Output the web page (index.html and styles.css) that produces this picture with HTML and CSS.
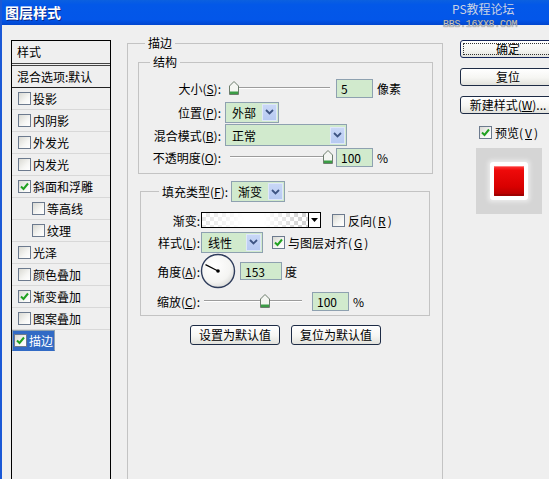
FILE: index.html
```html
<!DOCTYPE html>
<html lang="zh-CN">
<head>
<meta charset="utf-8">
<title>图层样式</title>
<link rel="stylesheet" href="styles.css">
</head>
<body>
<div class="window">
  <div class="titlebar">图层样式
    <span class="wm1">PS教程论坛</span>
    <span class="wm2">BBS.16XX8.COM</span>
  </div>
  <div class="content">
    <div class="stylelist">
      <div class="list-head">样式</div>
      <div class="list-blend">混合选项:默认</div>
      <div class="item"><span class="cb"></span>投影</div>
      <div class="item"><span class="cb"></span>内阴影</div>
      <div class="item"><span class="cb"></span>外发光</div>
      <div class="item"><span class="cb"></span>内发光</div>
      <div class="item"><span class="cb on"><svg viewBox="0 0 11 11"><path d="M2 5.5 L4.5 8 L9 2.5"/></svg></span>斜面和浮雕</div>
      <div class="item sub"><span class="cb"></span>等高线</div>
      <div class="item sub"><span class="cb"></span>纹理</div>
      <div class="item"><span class="cb"></span>光泽</div>
      <div class="item"><span class="cb"></span>颜色叠加</div>
      <div class="item"><span class="cb on"><svg viewBox="0 0 11 11"><path d="M2 5.5 L4.5 8 L9 2.5"/></svg></span>渐变叠加</div>
      <div class="item"><span class="cb"></span>图案叠加</div>
      <div class="item sel"><span class="cb on"><svg viewBox="0 0 11 11"><path d="M2 5.5 L4.5 8 L9 2.5"/></svg></span>描边</div>
    </div>

    <div class="panel">
      <fieldset class="outer">
        <legend class="leg-outer">描边</legend>
        <fieldset class="struct">
          <legend class="leg-struct">结构</legend>
          <div class="row r24">
            <span class="lbl">大小(<u>S</u>):</span>
            <div class="slider s-struct">
              <span class="thumb" style="left:-1px"><svg viewBox="0 0 10 14" width="10" height="14"><path class="th" d="M0.5 5 L5 0.5 L9.5 5 L9.5 13.5 L0.5 13.5 Z"/><rect class="tg" x="1" y="10.5" width="8" height="2.5"/></svg></span>
            </div>
            <span class="num">5</span>
            <span class="unit">像素</span>
          </div>
          <div class="row r24">
            <span class="lbl">位置(<u>P</u>):</span>
            <div class="sel w-pos"><span class="sel-txt">外部</span><span class="dd"><svg viewBox="0 0 9 6" width="9" height="6"><path d="M1 1 L4.5 4.5 L8 1"/></svg></span></div>
          </div>
          <div class="row r22">
            <span class="lbl">混合模式(<u>B</u>):</span>
            <div class="sel w-blend"><span class="sel-txt">正常</span><span class="dd"><svg viewBox="0 0 9 6" width="9" height="6"><path d="M1 1 L4.5 4.5 L8 1"/></svg></span></div>
          </div>
          <div class="row r22">
            <span class="lbl">不透明度(<u>O</u>):</span>
            <div class="slider s-struct">
              <span class="thumb" style="left:93px"><svg viewBox="0 0 10 14" width="10" height="14"><path class="th" d="M0.5 5 L5 0.5 L9.5 5 L9.5 13.5 L0.5 13.5 Z"/><rect class="tg" x="1" y="10.5" width="8" height="2.5"/></svg></span>
            </div>
            <span class="num">100</span>
            <span class="unit">%</span>
          </div>
        </fieldset>

        <fieldset class="fill">
          <legend class="leg-fill"><span class="leg-in">填充类型(<u>F</u>):<span class="sel w-fill"><span class="sel-txt">渐变</span><span class="dd"><svg viewBox="0 0 9 6" width="9" height="6"><path d="M1 1 L4.5 4.5 L8 1"/></svg></span></span></span></legend>
          <div class="row f22">
            <span class="lbl2">渐变:</span>
            <div class="grad"><span class="grad-fill"></span><span class="grad-btn"><svg viewBox="0 0 7 4" width="7" height="4"><path d="M0 0 H7 L3.5 4 Z"/></svg></span></div>
            <span class="chk m-rev"><span class="cb"></span>反向(<u>R</u>)</span>
          </div>
          <div class="row f22">
            <span class="lbl2">样式(<u>L</u>):</span>
            <div class="sel w-style"><span class="sel-txt">线性</span><span class="dd"><svg viewBox="0 0 9 6" width="9" height="6"><path d="M1 1 L4.5 4.5 L8 1"/></svg></span></div>
            <span class="chk m-align"><span class="cb on"><svg viewBox="0 0 11 11"><path d="M2 5.5 L4.5 8 L9 2.5"/></svg></span>与图层对齐(<u>G</u>)</span>
          </div>
          <div class="row f36">
            <span class="lbl2">角度(<u>A</u>):</span>
            <svg class="dial" viewBox="0 0 36 36" width="36" height="36">
              <defs>
                <radialGradient id="dg" cx="40%" cy="35%" r="70%">
                  <stop offset="0" stop-color="#ffffff"/>
                  <stop offset="0.7" stop-color="#f4f4f2"/>
                  <stop offset="1" stop-color="#d9d9d6"/>
                </radialGradient>
              </defs>
              <circle cx="18" cy="18" r="16.5" fill="url(#dg)" stroke="#2f3d5c" stroke-width="1.4"/>
              <line x1="18" y1="18" x2="5.5" y2="11.6" stroke="#000" stroke-width="1.2"/>
              <circle cx="18" cy="18" r="1.8" fill="#000"/>
            </svg>
            <span class="num w-angle">153</span>
            <span class="unit u-deg">度</span>
          </div>
          <div class="row f24">
            <span class="lbl2">缩放(<u>C</u>):</span>
            <div class="slider s-scale">
              <span class="thumb" style="left:56px"><svg viewBox="0 0 10 14" width="10" height="14"><path class="th" d="M0.5 5 L5 0.5 L9.5 5 L9.5 13.5 L0.5 13.5 Z"/><rect class="tg" x="1" y="10.5" width="8" height="2.5"/></svg></span>
            </div>
            <span class="num n-scale">100</span>
            <span class="unit">%</span>
          </div>
        </fieldset>

        <div class="btnrow">
          <button class="btn btn-wide">设置为默认值</button>
          <button class="btn btn-wide">复位为默认值</button>
        </div>
      </fieldset>
    </div>

    <div class="side">
      <button class="btn btn-side btn-default">确定</button>
      <button class="btn btn-side">复位</button>
      <button class="btn btn-side">新建样式(<u>W</u>)...</button>
      <div class="chk preview-chk"><span class="cb on"><svg viewBox="0 0 11 11"><path d="M2 5.5 L4.5 8 L9 2.5"/></svg></span>预览(<u>V</u>)</div>
      <div class="preview"><span class="red"></span></div>
    </div>
  </div>
</div>
</body>
</html>
```
FILE: styles.css
```css
* { box-sizing: border-box; }
html, body { margin: 0; padding: 0; }
body {
  font-family: "Noto Sans CJK SC", "Noto Sans", sans-serif;
  font-size: 12px;
  color: #000;
  background: #efefef;
}
u { text-decoration: underline; text-underline-offset: 1px; }

.window {
  width: 549px;
  height: 479px;
  overflow: hidden;
  background: #efefef;
  border-left: 2px solid #1a58d6;
}

.titlebar {
  position: relative;
  height: 25px;
  padding-left: 3px;
  background: linear-gradient(#0b60e0 0, #0358e8 18%, #0356e9 78%, #0146cf 100%);
  color: #fff;
  font-weight: bold;
  font-size: 14px;
  line-height: 25px;
  text-shadow: 1px 1px 0 #0a2a8a;
}
.wm1 {
  position: absolute;
  left: 450px;
  top: 1px;
  font-size: 12px;
  font-weight: normal;
  line-height: 16px;
  color: #c9d2e4;
  text-shadow: none;
  z-index: 2;
}
.wm2 {
  position: absolute;
  left: 441px;
  top: 19px;
  font-family: "Liberation Mono", monospace;
  font-size: 10px;
  font-weight: normal;
  line-height: 12px;
  letter-spacing: -0.3px;
  color: #c4c4c4;
  text-shadow: 0 0 1px #555;
  z-index: 2;
}

.content { display: flex; align-items: flex-start; }

/* left style list */
.stylelist {
  flex: none;
  margin: 15px 0 0 9px;
  width: 100px;
  height: 460px;
  border: 1px solid #000;
  background: #efefef;
  line-height: 21px;
}
.list-head {
  height: 25px;
  padding-left: 5px;
  line-height: 22px;
  border-bottom: 3px double #444;
}
.list-blend {
  height: 22px;
  padding-left: 5px;
  border-bottom: 1px solid #222;
}
.item {
  display: flex;
  align-items: center;
  gap: 1px;
  height: 22px;
  padding-left: 6px;
  border-bottom: 1px solid #d8d8d8;
}
.item.sub { padding-left: 20px; }
.item.sel { background: #316ac5; color: #fff; border-bottom-color: #316ac5; }

.cb {
  flex: none;
  display: inline-flex;
  align-items: center;
  justify-content: center;
  width: 13px;
  height: 13px;
  border: 1px solid #6c7a8e;
  background: linear-gradient(135deg, #d9d9d3, #f6f6f4 60%, #ffffff);
  margin-right: 1px;
}
.cb svg { width: 11px; height: 11px; }
.cb svg path { fill: none; stroke: #21a121; stroke-width: 2; }

/* main panel */
.panel { flex: none; margin: 10px 0 0 16px; width: 316px; }
fieldset { margin: 0; min-width: 0; border: 1px solid #c3c3c3; }
.outer { padding: 0 9px 0 10px; height: 470px; }
.leg-outer { margin-left: 7px; padding: 0 3px; line-height: 16px; height: 16px; }
.struct { margin: 3px 0 0; padding: 6px 0 5px; }
.leg-struct { margin-left: 11px; padding: 0 3px; line-height: 16px; height: 16px; }

.row { display: flex; align-items: center; }
.r24 { height: 24px; }
.r22 { height: 22px; }
.f22 { height: 22px; }
.f24 { height: 24px; }
.f36 { height: 36px; }
.lbl { flex: none; width: 82px; text-align: right; white-space: nowrap; }
.lbl2 { flex: none; width: 59px; text-align: right; white-space: nowrap; }

.slider {
  position: relative;
  flex: none;
  height: 14px;
  background:
    linear-gradient(#9c9c9c, #9c9c9c) 0 6px / 100% 1px no-repeat,
    linear-gradient(#ffffff, #ffffff) 0 7px / 100% 1px no-repeat;
}
.s-struct { width: 100px; margin-left: 9px; }
.s-scale { width: 98px; margin-left: 4px; }
.thumb { position: absolute; top: 0; width: 10px; height: 14px; }
.thumb svg { display: block; }
.th { fill: #f4f6f2; stroke: #6d7d6d; stroke-width: 1; }
.tg { fill: #3b9c45; }

.num {
  flex: none;
  display: inline-block;
  width: 37px;
  height: 19px;
  margin-left: 6px;
  padding: 0 4px;
  border: 1px solid #8ea1b0;
  background: #d1eacd;
  line-height: 17px;
}
.unit { margin-left: 4px; }

.sel {
  flex: none;
  display: inline-flex;
  align-items: center;
  height: 21px;
  padding: 1px;
  border: 1px solid #8ea1b0;
  background: #d1eacd;
}
.sel-txt { flex: 1; padding-left: 5px; line-height: 17px; }
.dd {
  flex: none;
  display: inline-flex;
  align-items: center;
  justify-content: center;
  width: 15px;
  height: 17px;
  background: linear-gradient(#c8d7f6, #b7caf2);
  border: 1px solid #dfe7fa;
}
.dd svg path { fill: none; stroke: #3e5583; stroke-width: 1.8; }
.w-pos { width: 54px; margin-left: 4px; }
.w-blend { width: 122px; height: 22px; margin-left: 4px; }
.w-fill { width: 54px; margin-left: 3px; }
.w-style { width: 62px; margin-left: 1px; }

.fill { margin: 7px 3px 0 2px; padding: 7px 0 2px; }
.leg-fill { margin-left: 18px; padding: 0 3px; height: 21px; }
.leg-in { display: inline-flex; align-items: center; height: 21px; }

.grad {
  flex: none;
  display: flex;
  width: 120px;
  height: 16px;
  margin-left: 1px;
  border: 1px solid #000;
}
.grad-fill {
  flex: 1;
  background:
    linear-gradient(to right, rgba(255,255,255,0.45), #ffffff 40%, #ffffff 58%, rgba(255,255,255,0.1) 92%),
    conic-gradient(#cfcfcf 25%, #ffffff 0 50%, #cfcfcf 0 75%, #ffffff 0) 0 0 / 8px 8px;
}
.grad-btn {
  flex: none;
  display: flex;
  align-items: center;
  justify-content: center;
  width: 12px;
  border-left: 1px solid #000;
  background: #fff;
}
.grad-btn svg path { fill: #000; }

.chk { display: inline-flex; align-items: center; gap: 2px; white-space: nowrap; }
.m-rev { margin-left: 11px; }
.m-align { margin-left: 9px; }

.dial { flex: none; display: block; }
.w-angle { width: 42px; height: 18px; margin-left: 4px; }
.u-deg { margin-left: 3px; }
.n-scale { margin-left: 10px; }

.btnrow { display: flex; justify-content: center; gap: 11px; margin-top: 9px; }
.btn {
  display: block;
  height: 20px;
  padding: 0;
  border: 1px solid #1d2b45;
  border-radius: 3px;
  background: linear-gradient(#ffffff, #f6f6f3 55%, #e2e2dc);
  font: 12px/18px "Noto Sans CJK SC", "Noto Sans", sans-serif;
  color: #000;
  text-align: center;
  white-space: nowrap;
}
.btn-wide { width: 90px; }

/* right column */
.side { flex: none; margin: 15px 0 0 17px; width: 96px; }
.btn-side { width: 96px; height: 18px; line-height: 16px; margin-bottom: 10px; }
.btn-default { outline: 1px dotted #333; outline-offset: -4px; border-color: #15265a; }
.preview-chk { margin: -5px 0 0 19px; height: 16px; }
.preview {
  display: flex;
  align-items: center;
  justify-content: center;
  width: 66px;
  height: 66px;
  margin: 7px 0 0 16px;
  background: #d5d5d5;
}
.red {
  width: 30px;
  height: 30px;
  border-radius: 1px;
  background: linear-gradient(#ff3b3b 0, #ee0a0a 15%, #d80000 70%, #b00000 100%);
  box-shadow: inset 0 1px 0 #ff7a7a, inset 0 -2px 0 #a00000, 0 0 0 4px #ffffff, 0 0 4px 6px rgba(255,255,255,0.55);
}
```
